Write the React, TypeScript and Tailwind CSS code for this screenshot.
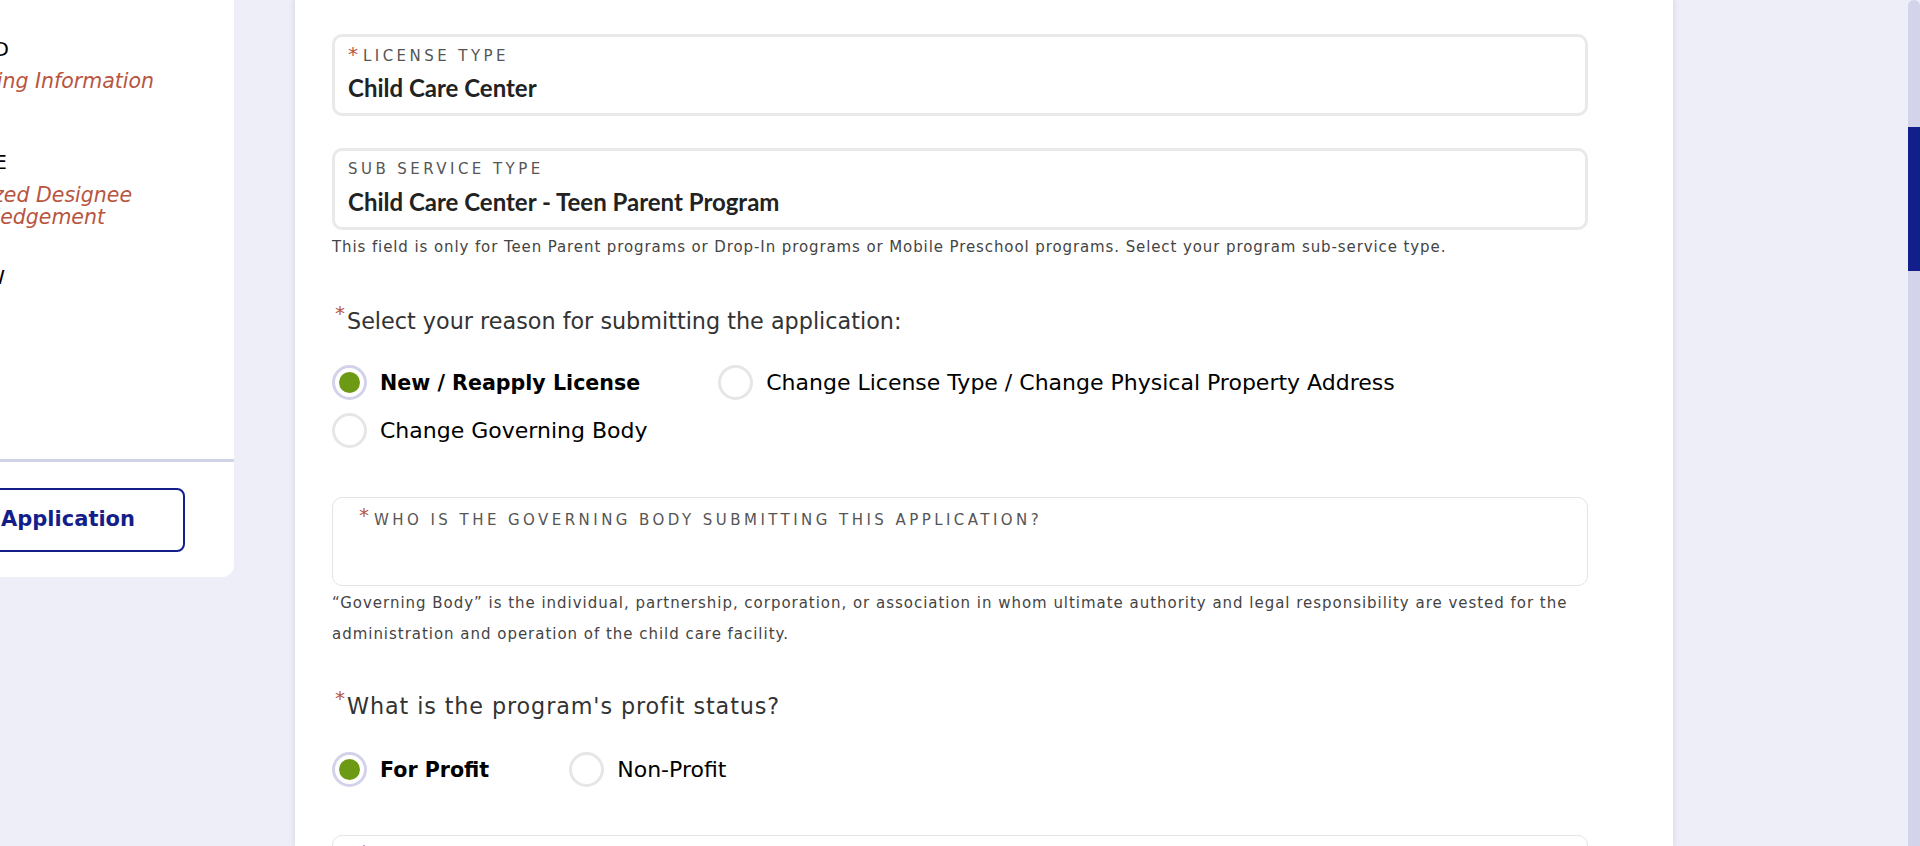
import React from 'react'

const body = "font-['DejaVu_Sans',sans-serif]"

function Req({ className = '' }: { className?: string }) {
  return <span className={`text-[20px] leading-none text-[#b8553f] ${className}`}>*</span>
}

function Radio({ label, checked }: { label: string; checked?: boolean }) {
  return (
    <label className="flex items-center gap-[13px]">
      {checked ? (
        <span className="flex h-[35px] w-[35px] items-center justify-center rounded-full border-[3px] border-[#d2d3eb] bg-white">
          <span className="h-[21px] w-[21px] rounded-full bg-[#6c9a14]" />
        </span>
      ) : (
        <span className="h-[35px] w-[35px] rounded-full border-[3px] border-[#e6e6e6] bg-white" />
      )}
      <span className={`leading-[28px] text-black ${checked ? 'text-[20.6px] font-bold' : 'text-[22px]'}`}>
        {label}
      </span>
    </label>
  )
}

function SideLine({ text, end, className }: { text: string; end: string; className: string }) {
  return (
    <div className={`flex justify-end whitespace-nowrap ${end}`}>
      <span className={`shrink-0 ${className}`}>{text}</span>
    </div>
  )
}

export default function App() {
  return (
    <div className={`flex h-[846px] w-[1920px] overflow-hidden bg-[#eeeef8] ${body}`}>
      {/* sidebar */}
      <aside className="flex h-[577px] w-[234px] shrink-0 flex-col overflow-hidden rounded-br-xl bg-white">
        <div className="h-[459px] pt-[35px]">
          <SideLine text="COMPLETED" end="w-[9px]" className="text-[20px] leading-[28px] text-black" />
          <SideLine
            text="Licensing Information"
            end="w-[154px] mt-[7px]"
            className="text-[20.5px] italic leading-[22px] text-[#b8553f]"
          />
          <SideLine text="NOT COMPLETE" end="w-[7px] mt-[56px]" className="text-[20px] leading-[28px] text-black" />
          <SideLine
            text="Authorized Designee"
            end="w-[132px] mt-[8px]"
            className="text-[20.5px] italic leading-[22px] text-[#b8553f]"
          />
          <SideLine
            text="Acknowledgement"
            end="w-[105px]"
            className="text-[20.5px] italic leading-[22px] text-[#b8553f]"
          />
          <SideLine text="REVIEW" end="w-[5px] mt-[35px]" className="text-[20px] leading-[28px] text-black" />
        </div>
        <div className="border-t-[3px] border-[#d0d2e8] pt-[26px]">
          <div className="flex w-[185px] justify-end">
            <button className="flex h-[64px] shrink-0 items-center whitespace-nowrap rounded-lg border-2 border-[#141e8a] pl-[40px] pr-[48px] text-[21px] font-bold text-[#141e8a]">
              Submit Application
            </button>
          </div>
        </div>
      </aside>

      {/* main form card */}
      <main className="ml-[61px] h-[846px] w-[1378px] shrink-0 overflow-hidden bg-white pl-[37px] pr-[85px] pt-[34px] shadow-[0_0_6px_rgba(120,120,170,0.25)]">
        <div className="h-[82px] rounded-[10px] border-[3px] border-[#e9e9e9] px-[13px] pt-[6px]">
          <div className="flex items-start">
            <Req className="mt-[1px]" />
            <span className="ml-[5px] mt-[4px] text-[15px] uppercase leading-[18px] tracking-[0.23em] text-[#555]">
              License Type
            </span>
          </div>
          <div className="mt-[9px] font-['Lato',sans-serif] text-[24px] font-bold leading-[28px] text-[#222]">
            Child Care Center
          </div>
        </div>

        <div className="mt-[32px] h-[82px] rounded-[10px] border-[3px] border-[#e9e9e9] px-[13px] pt-[9px]">
          <div className="text-[15px] uppercase leading-[18px] tracking-[0.23em] text-[#555]">Sub Service Type</div>
          <div className="mt-[10px] font-['Lato',sans-serif] text-[24px] font-bold leading-[28px] text-[#222]">
            Child Care Center - Teen Parent Program
          </div>
        </div>
        <p className="mt-[5px] text-[15px] leading-[24px] tracking-[0.06em] text-[#444]">
          This field is only for Teen Parent programs or Drop-In programs or Mobile Preschool programs. Select your
          program sub-service type.
        </p>

        <div className="mt-[48px] flex items-start pl-[3px]">
          <Req className="mt-[-4px]" />
          <span className="ml-[2px] text-[22.3px] leading-[28px] text-[#333]">
            Select your reason for submitting the application:
          </span>
        </div>

        <div className="mt-[30px] flex flex-wrap gap-x-[78px] gap-y-[13px]">
          <Radio label="New / Reapply License" checked />
          <Radio label="Change License Type / Change Physical Property Address" />
          <Radio label="Change Governing Body" />
        </div>

        <div className="mt-[49px] h-[89px] rounded-[10px] border border-[#e4e4e4] px-[26px] pt-[6px]">
          <div className="flex items-start">
            <Req className="mt-[1px]" />
            <span className="ml-[5px] mt-[7px] text-[15px] uppercase leading-[18px] tracking-[0.23em] text-[#555]">
              Who is the governing body submitting this application?
            </span>
          </div>
        </div>
        <p className="mt-[2px] text-[15px] leading-[31px] tracking-[0.065em] text-[#444]">
          “Governing Body” is the individual, partnership, corporation, or association in whom ultimate authority and
          legal responsibility are vested for the administration and operation of the child care facility.
        </p>

        <div className="mt-[42px] flex items-start pl-[3px]">
          <Req className="mt-[-4px]" />
          <span className="ml-[2px] text-[22.3px] leading-[28px] tracking-[0.04em] text-[#333]">
            What is the program's profit status?
          </span>
        </div>

        <div className="mt-[32px] flex gap-x-[80px]">
          <Radio label="For Profit" checked />
          <Radio label="Non-Profit" />
        </div>

        <div className="mt-[48px] h-[89px] rounded-[10px] border border-[#e4e4e4] px-[26px] pt-[6px]">
          <Req />
        </div>
      </main>

      <div className="flex-1" />

      {/* scrollbar */}
      <div className="flex h-[846px] w-[12px] shrink-0 flex-col rounded-t-md bg-[#d3d4ea]">
        <div className="mt-[127px] h-[144px] bg-[#121e8a]" />
      </div>
    </div>
  )
}
